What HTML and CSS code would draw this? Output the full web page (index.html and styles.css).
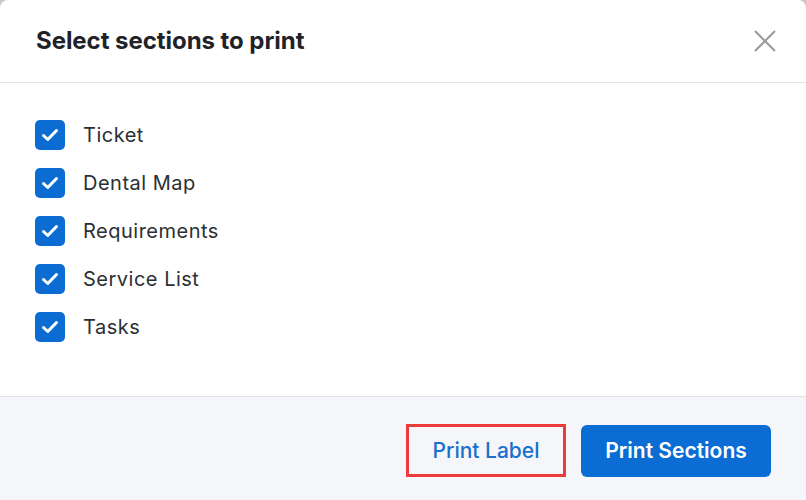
FILE: index.html
```html
<!DOCTYPE html>
<html>
<head>
<meta charset="utf-8">
<link rel="stylesheet" href="styles.css">
</head>
<body>
<div class="modal">
  <div class="header">
    <h1 class="title">Select sections to print</h1>
    <button class="close" aria-label="Close">
      <svg width="24" height="24" viewBox="0 0 24 24"><path d="M2 2 L22 22 M22 2 L2 22" stroke="#9a9a9a" stroke-width="2" fill="none"/></svg>
    </button>
  </div>
  <div class="body">
    <label class="row"><span class="box"><svg width="18" height="14" viewBox="0 0 18 14"><path d="M2.5 7.5 L6.8 11.5 L15.5 2.5" stroke="#fff" stroke-width="3" fill="none" stroke-linecap="round" stroke-linejoin="round"/></svg></span><span class="label">Ticket</span></label>
    <label class="row"><span class="box"><svg width="18" height="14" viewBox="0 0 18 14"><path d="M2.5 7.5 L6.8 11.5 L15.5 2.5" stroke="#fff" stroke-width="3" fill="none" stroke-linecap="round" stroke-linejoin="round"/></svg></span><span class="label">Dental Map</span></label>
    <label class="row"><span class="box"><svg width="18" height="14" viewBox="0 0 18 14"><path d="M2.5 7.5 L6.8 11.5 L15.5 2.5" stroke="#fff" stroke-width="3" fill="none" stroke-linecap="round" stroke-linejoin="round"/></svg></span><span class="label">Requirements</span></label>
    <label class="row"><span class="box"><svg width="18" height="14" viewBox="0 0 18 14"><path d="M2.5 7.5 L6.8 11.5 L15.5 2.5" stroke="#fff" stroke-width="3" fill="none" stroke-linecap="round" stroke-linejoin="round"/></svg></span><span class="label">Service List</span></label>
    <label class="row"><span class="box"><svg width="18" height="14" viewBox="0 0 18 14"><path d="M2.5 7.5 L6.8 11.5 L15.5 2.5" stroke="#fff" stroke-width="3" fill="none" stroke-linecap="round" stroke-linejoin="round"/></svg></span><span class="label">Tasks</span></label>
  </div>
  <div class="footer">
    <button class="btn btn-link">Print Label</button>
    <button class="btn btn-primary">Print Sections</button>
  </div>
</div>
</body>
</html>
```
FILE: styles.css
```css
html, body {
  margin: 0;
  padding: 0;
  background: #c8c8c8;
}
body {
  font-family: Inter, "Noto Sans", sans-serif;
}
.modal {
  width: 806px;
  height: 500px;
  background: #fff;
  border-radius: 8px 8px 0 0;
  display: flex;
  flex-direction: column;
  overflow: hidden;
}
.header {
  height: 82px;
  border-bottom: 1px solid #e2e4e8;
  display: flex;
  align-items: center;
  justify-content: space-between;
  padding: 0 29px 0 36px;
}
.title {
  margin: 0;
  font-size: 24px;
  font-weight: 700;
  color: #1f2329;
  letter-spacing: -0.05px;
  position: relative;
  top: -1px;
}
.close {
  border: 0;
  background: none;
  padding: 0;
  width: 24px;
  height: 24px;
  display: flex;
}
.body {
  flex: 1;
  padding: 37px 36px 0 35px;
  display: flex;
  flex-direction: column;
  gap: 18px;
}
.row {
  display: flex;
  align-items: center;
  height: 30px;
}
.box {
  width: 30px;
  height: 30px;
  border-radius: 5px;
  background: #0b6dd3;
  display: flex;
  align-items: center;
  justify-content: center;
  margin-right: 18px;
}
.label {
  font-size: 20px;
  color: #2b2f33;
  letter-spacing: 0.5px;
}
.footer {
  box-sizing: border-box;
  flex: none;
  height: 104px;
  border-top: 1px solid #dfe2e6;
  background: #f4f6f9;
  display: flex;
  align-items: center;
  justify-content: flex-end;
  padding: 4px 35px 0 0;
  gap: 15px;
}
.btn {
  font-family: Inter, "Noto Sans", sans-serif;
  height: 52px;
  border-radius: 6px;
  cursor: pointer;
}
.btn-link {
  background: none;
  color: #1a6fcf;
  border: 3px solid #ec3b3b;
  border-radius: 0;
  width: 160px;
  height: 53px;
  font-size: 21px;
  font-weight: 500;
}
.btn-primary {
  background: #0b6dd3;
  color: #fff;
  border: 0;
  width: 190px;
  font-size: 21px;
  font-weight: 600;
}
```
